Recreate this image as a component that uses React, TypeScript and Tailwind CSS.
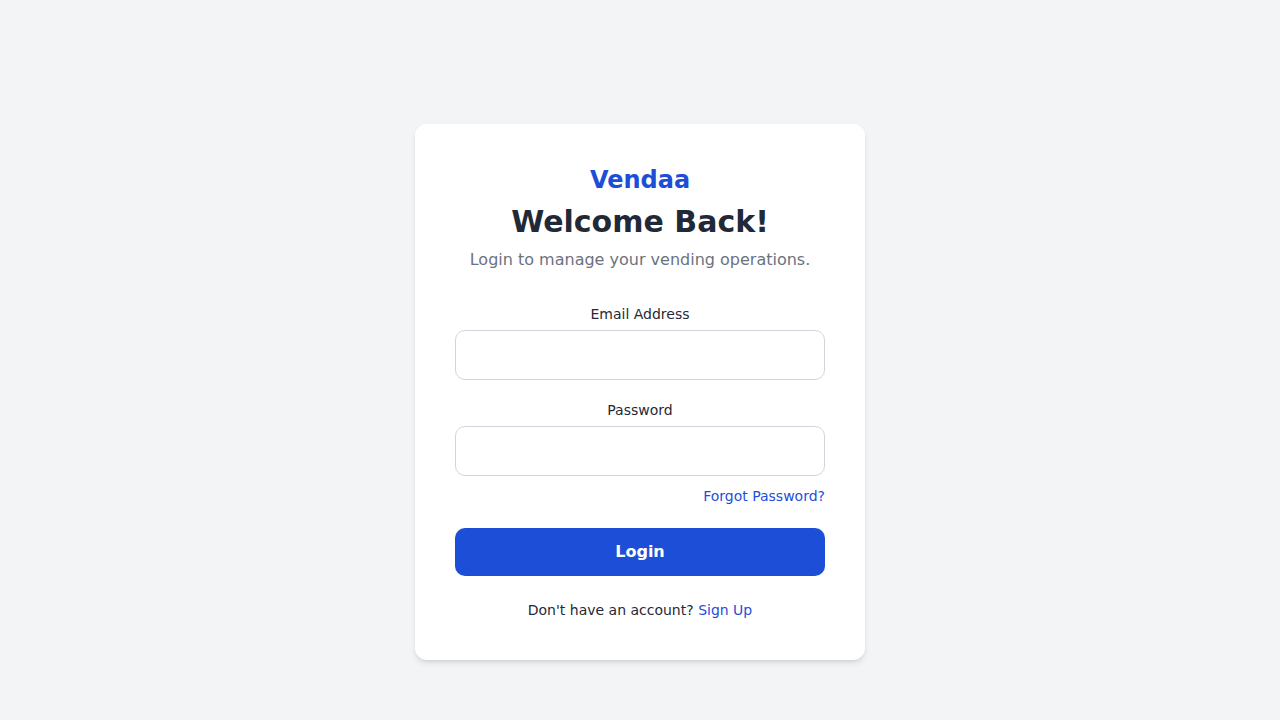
import { useState } from 'react';

export default function App() {
  const [email, setEmail] = useState('');
  const [password, setPassword] = useState('');

  return (
    <div
      className="min-h-screen bg-[#f3f4f6] flex justify-center pt-[124px]"
      style={{ fontFamily: '"DejaVu Sans", sans-serif' }}
    >
      <div className="w-[450px] h-[536px] bg-white rounded-xl shadow-md px-10 pt-10">
        <div className="text-center">
          <div className="text-2xl font-bold text-[#1d4ed8] leading-8">Vendaa</div>
          <h1 className="mt-2 text-3xl font-bold text-[#1f2937] leading-9">Welcome Back!</h1>
          <p className="mt-2 text-base text-[#6b7280] leading-6">Login to manage your vending operations.</p>
        </div>

        <form className="mt-8" onSubmit={(e) => e.preventDefault()}>
          <label className="block text-center text-sm text-[#1f2937] leading-5 mb-1.5">Email Address</label>
          <input
            type="email"
            value={email}
            onChange={(e) => setEmail(e.target.value)}
            className="block w-full h-[50px] border border-[#d1d5db] rounded-[10px] px-3 outline-none"
          />

          <label className="block text-center text-sm text-[#1f2937] leading-5 mt-5 mb-1.5">Password</label>
          <input
            type="password"
            value={password}
            onChange={(e) => setPassword(e.target.value)}
            className="block w-full h-[50px] border border-[#d1d5db] rounded-[10px] px-3 outline-none"
          />

          <div className="mt-2.5 text-right text-sm leading-5">
            <a href="#" className="text-[#1d4ed8]">Forgot Password?</a>
          </div>

          <button
            type="submit"
            className="mt-[22px] w-full h-12 bg-[#1d4ed8] text-white font-bold text-base rounded-[10px]"
          >
            Login
          </button>
        </form>

        <p className="mt-6 text-center text-sm text-[#1f2937] leading-5">
          Don't have an account? <a href="#" className="text-[#1d4ed8]">Sign Up</a>
        </p>
      </div>
    </div>
  );
}
